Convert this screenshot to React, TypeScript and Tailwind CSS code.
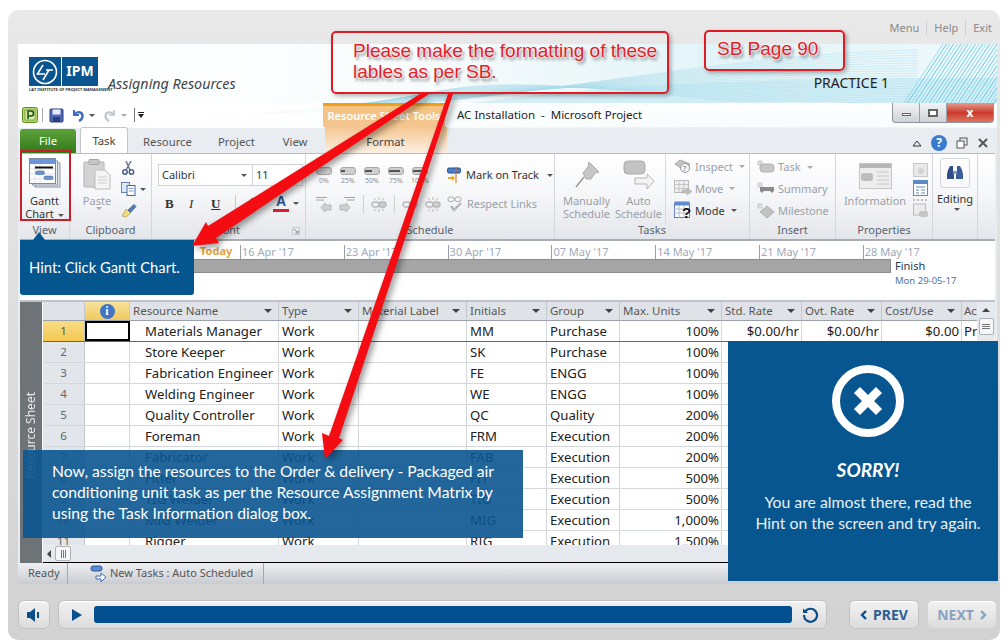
import React from 'react';

const rows = [
  ['1', 'Materials Manager', 'MM', 'Purchase', '100%'],
  ['2', 'Store Keeper', 'SK', 'Purchase', '100%'],
  ['3', 'Fabrication Engineer', 'FE', 'ENGG', '100%'],
  ['4', 'Welding Engineer', 'WE', 'ENGG', '100%'],
  ['5', 'Quality Controller', 'QC', 'Quality', '200%'],
  ['6', 'Foreman', 'FRM', 'Execution', '200%'],
  ['7', 'Fabricator', 'FAB', 'Execution', '200%'],
  ['8', 'Fitter', 'FIT', 'Execution', '500%'],
  ['9', 'TIG Welder', 'TIG', 'Execution', '500%'],
  ['10', 'MIG Welder', 'MIG', 'Execution', '1,000%'],
  ['11', 'Rigger', 'RIG', 'Execution', '1,500%'],
];

const gridCols = 'grid grid-cols-[42px_45px_149px_80px_108px_80px_73px_102px_80px_80px_80px_16px]';
const dates = ["16 Apr '17", "23 Apr '17", "30 Apr '17", "07 May '17", "14 May '17", "21 May '17", "28 May '17"];

function Caret({ light = false }: { light?: boolean }) {
  return <span className={`ml-1 inline-block h-0 w-0 border-x-[3px] border-t-[3px] border-x-transparent align-middle ${light ? 'border-t-[#aaa]' : 'border-t-[#555]'}`} />;
}

function HeaderCell({ label }: { label: string }) {
  return (
    <div className="flex items-center justify-between border-r border-[#c4c9d0] pl-[3px] pr-[6px] text-[11.5px] text-[#555]">
      <span className="whitespace-nowrap">{label}</span>
      <span className="h-0 w-0 border-x-[4px] border-t-[4px] border-x-transparent border-t-[#444]" />
    </div>
  );
}

function Waves() {
  const lines = Array.from({ length: 26 }, (_, i) => i);
  return (
    <svg className="absolute inset-0" width="979" height="84" viewBox="0 0 979 84" fill="none">
      <defs>
        <linearGradient id="hb" x1="0" x2="1" y1="0" y2="0">
          <stop offset="0" stopColor="#fff" />
          <stop offset="0.4" stopColor="#f8fcfd" />
          <stop offset="0.7" stopColor="#e3f4f8" />
          <stop offset="1" stopColor="#eef9fb" />
        </linearGradient>
      </defs>
      <rect width="979" height="84" fill="url(#hb)" />
      <path d="M380 70 C 560 40 720 34 979 34 L979 70 C 760 44 560 64 380 84 Z" fill="#b9e5f1" opacity="0.5" />
      {lines.map((i) => (
        <path key={i} d={`M${230 + i * 6} ${70 - i * 0.4} C 480 ${66 - i * 2.1}, 680 ${10 + i * 2.2}, 900 ${6 + i * 2.6}`} stroke="#a9dbe9" strokeWidth="0.6" opacity="0.7" />
      ))}
      {lines.map((i) => (
        <path key={`d${i}`} d={`M${884 + i * 3.6} 62 L${925 + i * 3.6} 0`} stroke={i % 2 ? '#5cc2de' : '#8fd6e8'} strokeWidth="0.9" />
      ))}
    </svg>
  );
}

function LtLogo() {
  return (
    <svg width="26" height="26" viewBox="0 0 26 26" fill="none" stroke="#fff" strokeWidth="1.6">
      <circle cx="13" cy="13" r="11.5" />
      <path d="M11 6 L5.5 15 H13" />
      <path d="M14 11 H21 M17 11 L11 21" />
    </svg>
  );
}

function QuickAccess() {
  return (
    <div className="flex items-center pl-[2px]">
      <svg width="16" height="16" viewBox="0 0 16 16"><rect x="0.5" y="0.5" width="15" height="15" rx="2" fill="#b6d968" stroke="#5b8b22" /><rect x="3" y="3" width="10" height="10" fill="#d8eca8" stroke="#3d6a16" strokeWidth="0.5" /><path d="M6 12V4h3a2 2 0 010 5H6" fill="none" stroke="#1e5216" strokeWidth="1.6" /></svg>
      <span className="ml-[4px] h-[14px] w-px bg-[#aaa]" />
      <svg className="ml-[6px]" width="15" height="15" viewBox="0 0 15 15"><rect x="1" y="1" width="13" height="13" rx="1" fill="#4f67b5" stroke="#2c3e7f" /><rect x="3.5" y="1.5" width="8" height="5" fill="#e6ebf7" /><rect x="4" y="9" width="7" height="5" fill="#2c3e7f" /></svg>
      <svg className="ml-[7px]" width="14" height="14" viewBox="0 0 14 14" fill="none"><path d="M3 2V7H8" stroke="#3f6fc4" strokeWidth="2" /><path d="M3.5 6.5C6 3 11 3.5 11.5 7.5C11.8 10 10 12 8 13" stroke="#3f6fc4" strokeWidth="2.4" /></svg>
      <Caret />
      <svg className="ml-[8px]" width="14" height="14" viewBox="0 0 14 14" fill="none"><path d="M11 2V7H6" stroke="#bcc3cc" strokeWidth="1.6" /><path d="M10.5 6.5C8 3 3 3.5 2.5 7.5C2.2 10 4 12 6 13" stroke="#bcc3cc" strokeWidth="2" /></svg>
      <Caret light />
      <span className="ml-[7px] h-[14px] w-px bg-[#777]" />
      <span className="ml-[3px] flex flex-col items-center gap-[1px]"><span className="h-px w-[6px] bg-[#222]" /><span className="h-0 w-0 border-x-[3px] border-t-[4px] border-x-transparent border-t-[#222]" /></span>
    </div>
  );
}

function GanttIcon() {
  return (
    <svg width="32" height="31" viewBox="0 0 32 31">
      <rect x="6" y="5" width="25" height="24" fill="#dfe4ea" stroke="#8f98a5" />
      <rect x="3.5" y="3" width="25" height="24" fill="#edf0f4" stroke="#8f98a5" />
      <rect x="0.5" y="0.5" width="26" height="25" fill="#fff" stroke="#7d8a99" />
      <rect x="1" y="1" width="25" height="5" fill="#6d94de" />
      <path d="M1 11H26M1 16H26M1 21H26M6 6V25M11 6V25" stroke="#cfd6e0" strokeWidth="0.7" />
      <rect x="6" y="8.5" width="18" height="2" fill="#111" />
      <rect x="6.5" y="13" width="9" height="3.5" rx="1.5" fill="#6f94cf" stroke="#36598f" strokeWidth="0.5" />
      <rect x="15" y="18" width="9" height="3.5" rx="1.5" fill="#6f94cf" stroke="#36598f" strokeWidth="0.5" />
    </svg>
  );
}

function PasteIcon() {
  return (
    <svg width="28" height="31" viewBox="0 0 28 31">
      <rect x="1" y="3" width="20" height="25" rx="1" fill="#d3d3d3" stroke="#b0b0b0" />
      <rect x="6" y="0.5" width="10" height="5" rx="1" fill="#c6c6c6" stroke="#a5a5a5" />
      <path d="M12 11H22L27 16V30H12Z" fill="#f4f4f4" stroke="#bdbdbd" />
      <path d="M15 18H24M15 21H24M15 24H24" stroke="#cfcfcf" />
    </svg>
  );
}

function Cut() {
  return <svg width="14" height="15" viewBox="0 0 14 15" fill="none" stroke="#4a5f88" strokeWidth="1.5"><path d="M5 1L9 10M10 1L5 10" stroke="#6f7785" /><circle cx="4" cy="12" r="2.2" /><circle cx="10.5" cy="12" r="2.2" /></svg>;
}
function CopyIcon() {
  return <svg width="15" height="14" viewBox="0 0 15 14"><rect x="0.5" y="0.5" width="8" height="10" fill="#dfe8f5" stroke="#6583b4" /><rect x="6" y="3.5" width="8" height="10" fill="#fff" stroke="#3f68a8" /><path d="M7.5 6.5H12.5M7.5 9H12.5" stroke="#7d98c4" /></svg>;
}
function Brush() {
  return <svg width="16" height="15" viewBox="0 0 16 15"><path d="M1 13L5 6L10 10L5 14Z" fill="#eedb82" stroke="#a88f35" strokeWidth="0.6" /><path d="M7 7L13 1.5L15 3.5L9.5 9.5Z" fill="#5578b5" stroke="#2e4a80" strokeWidth="0.6" /></svg>;
}

function Pill({ label, fill }: { label: string; fill: number }) {
  return (
    <div className="flex w-[24px] flex-col items-center leading-none">
      <span className="relative h-[8px] w-[16px] overflow-hidden rounded-[3px] border border-[#a8a8a8] bg-[#cfcfcf]">
        <span className={`absolute left-0 top-[2px] h-[2px] bg-[#555] ${fill === 0 ? 'w-0' : fill === 25 ? 'w-[4px]' : fill === 50 ? 'w-[7px]' : fill === 75 ? 'w-[11px]' : 'w-full'}`} />
      </span>
      <span className="mt-[2px] text-[7px] text-[#8c8c8c]">{label}</span>
    </div>
  );
}

function IndentIcon({ flip = false }: { flip?: boolean }) {
  return (
    <svg width="17" height="17" viewBox="0 0 17 17" className={flip ? '-scale-x-100' : ''} fill="none">
      <path d="M1 1.5H12M1 4H9" stroke="#a3a3a3" />
      <path d="M6 11.5L10 7V9H16V14H10V16Z" fill="#cfcfcf" stroke="#a8a8a8" strokeWidth="0.7" />
    </svg>
  );
}
function LinkIcon({ broken = false }: { broken?: boolean }) {
  return (
    <svg width="16" height="15" viewBox="0 0 16 15" fill="none">
      <rect x="1" y="5" width="7" height="5" rx="2.5" stroke="#b8b8b8" strokeWidth="1.4" />
      <rect x="8" y="5" width="7" height="5" rx="2.5" stroke="#b8b8b8" strokeWidth="1.4" fill={broken ? '#cfcfcf' : 'none'} />
      {broken && <path d="M8 0V3M3 1L5 3.5M13 1L11 3.5M8 12V15M3 14L5 11.5M13 14L11 11.5" stroke="#b8b8b8" />}
    </svg>
  );
}
function SmallIcon({ kind }: { kind: string }) {
  if (kind === 'inspect') return <svg width="19" height="15" viewBox="0 0 19 15"><path d="M1 5L6 1L16 5L11 12Z" fill="#c4c4c4" stroke="#a5a5a5" /><circle cx="11" cy="9" r="4.5" fill="#f5f5f5" stroke="#999" /><text x="9" y="12" fontSize="7" fill="#666">?</text></svg>;
  if (kind === 'move') return <svg width="19" height="16" viewBox="0 0 19 16"><rect x="0.5" y="0.5" width="14" height="12" fill="#efefef" stroke="#bbb" /><path d="M0 4.5H14M0 8.5H14M5 0V12M10 0V12" stroke="#c6c6c6" /><path d="M8 10H13V8L18 11.5L13 15V13H8Z" fill="#bfbfbf" stroke="#a5a5a5" strokeWidth="0.5" /></svg>;
  if (kind === 'mode') return <svg width="19" height="18" viewBox="0 0 19 18"><rect x="0.5" y="2.5" width="15" height="14" fill="#fff" stroke="#5c7cb5" /><rect x="0.5" y="0.5" width="15" height="4" fill="#5f8ccb" /><path d="M0 8H15M0 12H15M5 4V17M10 4V17" stroke="#aebcd3" /><text x="8" y="17" fontSize="15" fontWeight="bold" fill="#111" fontFamily="Liberation Sans">?</text></svg>;
  if (kind === 'task') return <svg width="19" height="14" viewBox="0 0 19 14"><path d="M1 1H5V5H1Z" fill="#ddd" stroke="#ccc" /><rect x="3" y="4" width="14" height="8" rx="3" fill="#c7c7c7" stroke="#b0b0b0" /></svg>;
  if (kind === 'summary') return <svg width="19" height="14" viewBox="0 0 19 14"><path d="M1 1H5V5H1Z" fill="#ddd" stroke="#ccc" /><path d="M3 5H17V9L15 11L13 9H7L5 11L3 9Z" fill="#8b8b8b" /></svg>;
  return <svg width="19" height="17" viewBox="0 0 19 17"><path d="M1 1H5V5H1Z" fill="#ddd" stroke="#ccc" /><path d="M10 3L17 9L10 15L3 9Z" fill="#c2c2c2" stroke="#b0b0b0" /></svg>;
}

function Group({ label, className, children }: { label: string; className: string; children: React.ReactNode }) {
  return (
    <div className={`flex h-full shrink-0 flex-col border-r border-[#d3d6db] ${className}`}>
      <div className="min-h-0 flex-1">{children}</div>
      <div className="h-[17px] text-center text-[11px] leading-[15px] text-[#5b6370]">{label}</div>
    </div>
  );
}

function SmallRow({ icon, label, dim = true, caret = false }: { icon: string; label: string; dim?: boolean; caret?: boolean }) {
  return (
    <div className={`flex h-[22px] items-center gap-[2px] text-[11px] ${dim ? 'text-[#9aa0a8]' : 'text-[#333]'}`}>
      <span className="flex w-[19px] justify-center"><SmallIcon kind={icon} /></span>
      <span>{label}</span>
      {caret && <Caret light={dim} />}
    </div>
  );
}

function Ribbon() {
  return (
    <div className="flex h-[87px] border-b-2 border-[#a9adb3] bg-gradient-to-b from-white via-[#f5f6f8] to-[#e3e6ea] text-[#333]">
      <Group label="View" className="w-[50px]">
        <div className="flex flex-col items-center pt-[4px] text-[11px] leading-[13px]">
          <GanttIcon />
          <span className="mt-[5px]">Gantt</span>
          <span>Chart<Caret /></span>
        </div>
      </Group>
      <Group label="Clipboard" className="w-[82px]">
        <div className="flex pl-[12px] pt-[5px]">
          <div className="flex w-[30px] flex-col items-center text-[11px] leading-[13px] text-[#9aa0a8]">
            <PasteIcon />
            <span className="mt-[4px]">Paste</span>
            <Caret light />
          </div>
          <div className="ml-[9px] flex flex-col gap-[7px] pt-[1px]">
            <Cut />
            <span className="flex items-center"><CopyIcon /><Caret /></span>
            <Brush />
          </div>
        </div>
      </Group>
      <Group label="Font" className="relative w-[154px]">
        <div className="pl-[6px] pt-[10px]">
          <div className="flex h-[22px] w-[145px] border border-[#cfd3d8] bg-white text-[11px] leading-[20px]">
            <span className="flex w-[94px] items-center justify-between border-r border-[#cfd3d8] pl-[3px] pr-[5px]">Calibri<Caret /></span>
            <span className="flex flex-1 items-center justify-between pl-[3px] pr-[5px]">11<Caret /></span>
          </div>
          <div className="mt-[8px] flex items-center pl-[7px] font-['Liberation_Serif'] text-[13px] leading-none">
            <b className="w-[24px]">B</b>
            <i className="w-[22px]">I</i>
            <span className="w-[24px] font-bold underline">U</span>
            <span className="h-[16px] w-px bg-[#c8c8c8]" />
            <svg className="ml-[8px]" width="15" height="15" viewBox="0 0 15 15"><path d="M3 9L8 2L12 8L7 12Z" fill="#eee" stroke="#888" /><path d="M12 9L14 13H10Z" fill="#d8c050" /></svg>
            <span className="ml-[14px] flex flex-col items-center font-['Liberation_Sans'] text-[14px] font-bold text-[#2a4d8f]">A<span className="mt-[1px] h-[3px] w-[16px] bg-[#e01b2f]" /></span>
            <Caret />
          </div>
        </div>
        <svg className="absolute bottom-[4px] right-[5px]" width="8" height="8" viewBox="0 0 8 8" fill="none" stroke="#8a8f96"><path d="M0.5 0.5H7.5V7.5H0.5Z" stroke="#c4c7cb" /><path d="M2 2L6 6M6 3.5V6H3.5" /></svg>
      </Group>
      <Group label="Schedule" className="w-[249px]">
        <div className="flex pl-[6px] pt-[13px]">
          <div className="w-[135px]">
            <div className="flex">
              <Pill label="0%" fill={0} />
              <Pill label="25%" fill={25} />
              <Pill label="50%" fill={50} />
              <Pill label="75%" fill={75} />
              <Pill label="100%" fill={100} />
            </div>
            <div className="mt-[11px] flex items-center gap-[7px] pl-[3px]">
              <IndentIcon />
              <IndentIcon flip />
              <span className="h-[18px] w-px bg-[#d0d0d0]" />
              <LinkIcon broken />
              <span className="h-[18px] w-px bg-[#d0d0d0]" />
              <LinkIcon />
              <LinkIcon broken />
            </div>
          </div>
          <div className="-mt-[3px] text-[11px]">
            <div className="flex h-[22px] items-center gap-[4px]">
              <svg width="15" height="16" viewBox="0 0 15 16"><rect x="0.5" y="1" width="13" height="5" rx="1.5" fill="#4a7dc9" stroke="#2a4f8a" /><path d="M9 0V16" stroke="#c96a1e" /><path d="M1 10H5V8L8 11L5 14V12H1Z" fill="#eea62a" /></svg>
              <span>Mark on Track</span><Caret />
            </div>
            <div className="mt-[7px] flex h-[22px] items-center gap-[4px] text-[#9aa0a8]">
              <svg width="16" height="16" viewBox="0 0 16 16" fill="none"><rect x="1" y="1" width="6" height="4.5" rx="2" stroke="#aaa" /><rect x="8" y="1" width="6" height="4.5" rx="2" stroke="#aaa" /><path d="M4 10L7 14L14 7" stroke="#b5b5b5" strokeWidth="2.4" /></svg>
              <span>Respect Links</span>
            </div>
          </div>
        </div>
      </Group>
      <Group label="Tasks" className="w-[195px]">
        <div className="flex pl-[8px] pt-[6px] text-[11px] leading-[13px] text-[#9aa0a8]">
          <div className="flex w-[47px] flex-col items-center">
            <svg width="30" height="30" viewBox="0 0 30 30"><path d="M17 2L27 12L23 13L19 19L14 19L11 13L16 7Z" fill="#c6c6c6" stroke="#aaa" /><path d="M12 17L4 27" stroke="#999" strokeWidth="1.5" /></svg>
            <span className="mt-[4px]">Manually</span>
            <span>Schedule</span>
          </div>
          <div className="ml-[5px] flex w-[47px] flex-col items-center">
            <svg width="32" height="30" viewBox="0 0 32 30"><rect x="1" y="1" width="21" height="13" rx="4" fill="#c3c3c3" stroke="#aaa" /><path d="M12 18H24V14L31 21L24 29V24H12Z" fill="#f4f4f4" stroke="#b5b5b5" /></svg>
            <span className="mt-[4px]">Auto</span>
            <span>Schedule</span>
          </div>
          <div className="-mt-[6px] ml-[3px] flex h-[70px] w-[74px] flex-col border-l border-[#d8dade] pl-[8px] pt-[1px]">
            <SmallRow icon="inspect" label="Inspect" caret />
            <SmallRow icon="move" label="Move" caret />
            <SmallRow icon="mode" label="Mode" dim={false} caret />
          </div>
        </div>
      </Group>
      <Group label="Insert" className="w-[86px]">
        <div className="pl-[7px] pt-[2px]">
          <SmallRow icon="task" label="Task" caret />
          <SmallRow icon="summary" label="Summary" />
          <SmallRow icon="milestone" label="Milestone" />
        </div>
      </Group>
      <Group label="Properties" className="w-[97px]">
        <div className="flex pl-[7px] pt-[9px] text-[11px] text-[#9aa0a8]">
          <div className="flex w-[64px] flex-col items-center">
            <svg width="33" height="26" viewBox="0 0 33 26"><rect x="0.5" y="0.5" width="32" height="25" fill="#ededed" stroke="#c5c5c5" /><rect x="1" y="1" width="31" height="4" fill="#b5b5b5" /><rect x="2" y="10" width="12" height="8" rx="3" fill="#bdbdbd" /><path d="M18 9H30M18 13H30M18 17H30M18 21H30" stroke="#c8c8c8" /></svg>
            <span className="mt-[4px]">Information</span>
          </div>
          <div className="ml-[6px] flex flex-col gap-[3px]">
            <svg width="15" height="14" viewBox="0 0 15 14"><rect x="0.5" y="0.5" width="14" height="13" fill="#e9e9e9" stroke="#c9c9c9" /><circle cx="8" cy="8" r="3" fill="#d2d2d2" /></svg>
            <svg width="15" height="16" viewBox="0 0 15 16"><rect x="0.5" y="0.5" width="14" height="15" fill="#fff" stroke="#5d8bc5" /><rect x="1" y="1" width="13" height="3" fill="#5d8bc5" /><path d="M3 7H12M3 10H6M8 10H12M3 13H6M8 13H12" stroke="#5d8bc5" /></svg>
            <svg width="15" height="19" viewBox="0 0 15 19"><path d="M0 1H15" stroke="#8b8b8b" strokeDasharray="2 2" /><rect x="0.5" y="5" width="12" height="11" fill="#ececec" stroke="#bbb" /><rect x="6" y="12" width="9" height="6" rx="2" fill="#c5c5c5" /></svg>
          </div>
        </div>
      </Group>
      <Group label="" className="w-[45px]">
        <div className="flex flex-col items-center pt-[4px] text-[11px]">
          <span className="flex h-[30px] w-[30px] items-center justify-center rounded-[3px] border border-[#d4d6da]">
            <svg width="18" height="16" viewBox="0 0 18 16"><path d="M2 5L4 1H7V5L8 10V14H1V9Z" fill="#2f4d86" /><path d="M16 5L14 1H11V5L10 10V14H17V9Z" fill="#3b5d9c" /><rect x="7" y="6" width="4" height="3" fill="#8aa0c5" /></svg>
          </span>
          <span className="mt-[3px]">Editing</span>
          <Caret />
        </div>
      </Group>
    </div>
  );
}

function Timeline() {
  return (
    <div className="h-[61px] border-b-2 border-[#bfc3c8] bg-white">
      <div className="flex h-[18px] items-end pl-[180px] text-[11px] text-[#a0aab8]">
        <span className="w-[40px] font-bold text-[#e3a53a]">Today</span>
        {dates.map((d) => (
          <span key={d} className="w-[103.8px] whitespace-nowrap border-l border-[#9aa0a8] pl-[1px] leading-[14px]">{d}</span>
        ))}
      </div>
      <div className="flex h-[38px]">
        <div className="h-[14px] w-[871px] border border-[#8c8c8c] bg-[#a5a5a5]" />
        <div className="pl-[4px] leading-none">
          <div className="mt-[1px] text-[11px] text-[#1d3a55]">Finish</div>
          <div className="mt-[5px] text-[9.5px] text-[#4d74a8]">Mon 29-05-17</div>
        </div>
      </div>
    </div>
  );
}

function Sheet() {
  return (
    <div className="flex min-h-0 flex-1">
      <div className="relative w-[23px] shrink-0 border-r border-[#fff] bg-[#6e7378]">
        <span className="absolute bottom-[84px] left-[3px] rotate-180 whitespace-nowrap text-[12px] leading-[16px] text-[#e8e8e8] [writing-mode:vertical-rl]">Resource Sheet</span>
      </div>
      <div className="min-w-0 flex-1">
        <div className="relative h-[243px] overflow-hidden bg-white">
          <div className={`${gridCols} h-[19px] border-b border-[#9ba2aa] bg-[#dfe3e8]`}>
            <div className="border-r border-[#c4c9d0]" />
            <div className="flex items-center justify-center border-r border-[#c4c9d0] bg-gradient-to-b from-[#f6e29a] to-[#f1c95c]">
              <span className="flex h-[15px] w-[15px] items-center justify-center rounded-full bg-[#3f74c6] font-['Liberation_Serif'] text-[12px] font-bold text-white">i</span>
            </div>
            <HeaderCell label="Resource Name" />
            <HeaderCell label="Type" />
            <HeaderCell label="Material Label" />
            <HeaderCell label="Initials" />
            <HeaderCell label="Group" />
            <HeaderCell label="Max. Units" />
            <HeaderCell label="Std. Rate" />
            <HeaderCell label="Ovt. Rate" />
            <HeaderCell label="Cost/Use" />
            <div className="pl-[2px] text-[11.5px] leading-[18px] text-[#555]">Ac</div>
          </div>
          {rows.map((r, i) => (
            <div key={r[0]} className={`${gridCols} h-[21px] border-b text-[13.2px] leading-[20px] text-[#222] ${i === 0 ? 'border-[#666]' : 'border-[#d4d7db]'}`}>
              <div className={`border-r border-[#c4c9d0] text-center text-[11.5px] ${i === 0 ? 'bg-gradient-to-b from-[#f8dc85] to-[#f5c84f] text-[#555]' : 'bg-[#e2e5ea] text-[#666]'}`}>{r[0]}</div>
              <div className={`${i === 0 ? 'border-2 border-black' : 'border-r border-[#d4d7db]'}`} />
              <div className="whitespace-nowrap border-r border-[#d4d7db] pl-[15px]">{r[1]}</div>
              <div className="border-r border-[#d4d7db] pl-[3px]">Work</div>
              <div className="border-r border-[#d4d7db]" />
              <div className="border-r border-[#d4d7db] pl-[3px]">{r[2]}</div>
              <div className="border-r border-[#d4d7db] pl-[3px]">{r[3]}</div>
              <div className="border-r border-[#d4d7db] pr-[2px] text-right">{r[4]}</div>
              <div className="border-r border-[#d4d7db] pr-[2px] text-right">$0.00/hr</div>
              <div className="border-r border-[#d4d7db] pr-[2px] text-right">$0.00/hr</div>
              <div className="border-r border-[#d4d7db] pr-[2px] text-right">$0.00</div>
              <div className="overflow-hidden pl-[2px]">Pr</div>
            </div>
          ))}
          <div className="absolute right-0 top-0 h-full w-[18px] bg-[#e6e9ed]">
            <span className="mx-auto mt-[6px] block h-0 w-0 border-x-[4px] border-b-[4px] border-x-transparent border-b-[#444]" />
            <span className="mx-auto mt-[6px] flex h-[17px] w-[15px] flex-col items-center justify-center gap-[1px] rounded-[2px] border border-[#aeb3ba] bg-[#f5f6f8]">
              <span className="h-px w-[8px] bg-[#777]" /><span className="h-px w-[8px] bg-[#777]" /><span className="h-px w-[8px] bg-[#777]" />
            </span>
          </div>
        </div>
        <div className="flex h-[18px] items-center border-b border-black bg-[#e6e9ed] pl-[4px]">
          <span className="h-0 w-0 border-y-[4px] border-r-[4px] border-y-transparent border-r-[#444]" />
          <span className="ml-[4px] flex h-[15px] w-[16px] items-center justify-center gap-[1px] rounded-[2px] border border-[#aeb3ba] bg-[#f5f6f8]">
            <span className="h-[8px] w-px bg-[#777]" /><span className="h-[8px] w-px bg-[#777]" /><span className="h-[8px] w-px bg-[#777]" />
          </span>
        </div>
      </div>
    </div>
  );
}

function StatusBar() {
  return (
    <div className="-mx-[2px] flex h-[21px] shrink-0 items-center bg-gradient-to-b from-[#eef0f3] to-[#c9ccd1] text-[11px] text-[#555]">
      <span className="flex h-full w-[50px] items-center border-r border-[#a5a8ad] pl-[10px]">Ready</span>
      <svg className="ml-[22px]" width="17" height="18" viewBox="0 0 17 18"><rect x="1" y="1" width="11" height="5" rx="2" fill="#5a8ad0" stroke="#2f5a9a" /><path d="M6 11H11V8L16 12L11 17V14H6Z" fill="#fff" stroke="#3f6db0" /></svg>
      <span className="ml-[3px] flex h-full items-center border-r border-[#a5a8ad] pr-[10px]">New Tasks : Auto Scheduled</span>
    </div>
  );
}

function Controls() {
  const btn = 'rounded-[6px] border border-[#c2c2c2] bg-gradient-to-b from-[#f2f2f2] to-[#dcdcdc] shadow-[inset_0_1px_0_#fff]';
  return (
    <div className="flex h-[29px] items-stretch pl-[10px]">
      <div className={`${btn} flex w-[32px] items-center justify-center`}>
        <svg width="14" height="14" viewBox="0 0 14 14" fill="#0a4f8c"><path d="M0 4H3L8 0V14L3 10H0Z" /><rect x="10" y="4" width="2" height="6" /></svg>
      </div>
      <div className={`${btn} ml-[8px] flex w-[769px] items-center`}>
        <span className="ml-[13px] h-0 w-0 border-y-[6px] border-l-[10px] border-y-transparent border-l-[#0a4f8c]" />
        <div className="ml-[12px] h-[17px] w-[698px] rounded-[3px] bg-[#034f8f]" />
        <svg className="ml-[10px]" width="17" height="17" viewBox="0 0 17 17" fill="none" stroke="#0a4f8c" strokeWidth="2.2"><path d="M3.2 5.5A6.5 6.5 0 1 1 2 9" /><path d="M1 2.5V7H6" fill="#0a4f8c" stroke="none" /></svg>
      </div>
      <div className={`${btn} ml-[22px] flex w-[70px] items-center justify-center gap-[6px] text-[14px] font-bold text-[#2a5d91]`}>
        <svg width="7" height="10" viewBox="0 0 7 10" fill="none" stroke="#0a4f8c" strokeWidth="2.4"><path d="M6 1L2 5L6 9" /></svg>PREV
      </div>
      <div className={`${btn} ml-[8px] flex w-[70px] items-center justify-center gap-[6px] border-[#d4d4d4] text-[14px] font-bold text-[#8aa3bd]`}>
        NEXT<svg width="7" height="10" viewBox="0 0 7 10" fill="none" stroke="#8aa3bd" strokeWidth="2.4"><path d="M1 1L5 5L1 9" /></svg>
      </div>
    </div>
  );
}

function Arrows() {
  return (
    <svg className="pointer-events-none absolute left-0 top-0 drop-shadow-[3px_3px_3px_rgba(0,0,0,0.4)]" width="1005" height="643" viewBox="0 0 1005 643">
      <path d="M420 94 L429 94 L216 238 L219 243 L192 246 L206 222 L208 226 Z" fill="#f30d12" />
      <path d="M448 94 L453 94 L339 438 L343 440 L325 459 L322 433 L329 436 Z" fill="#f30d12" />
    </svg>
  );
}

export default function App() {
  const callout = "absolute whitespace-nowrap rounded-[5px] border-2 border-[#df1c24] font-['Liberation_Sans'] text-[#e2202a] [text-shadow:0_0_2px_#fff,0_0_2px_#fff,2px_3px_3px_rgba(0,0,0,0.45)] shadow-[2px_2px_4px_rgba(0,0,0,0.3)]";
  return (
    <div className="relative h-[643px] w-[1005px] overflow-hidden bg-white font-['Noto_Sans',sans-serif]">
      <div className="ml-[8px] mt-[10px] h-[630px] w-[992px] rounded-[10px] bg-gradient-to-b from-[#e9e9e9] to-[#d2d2d2]">
        <div className="flex h-[34px] items-center justify-end pr-[8px] pt-[2px] text-[11px] text-[#8a8a8a]">
          <span className="border-r border-[#cfcfcf] pr-[7px]">Menu</span>
          <span className="border-r border-[#cfcfcf] px-[7px]">Help</span>
          <span className="pl-[7px]">Exit</span>
        </div>
        <div className="relative ml-[10px] h-[540px] w-[979px] bg-[#e9ecf0]">
          <Waves />
          <div className="relative flex h-[59px] items-start pl-[11px] pt-[13px]">
            <div className="w-[69px]">
              <div className="flex h-[29px] bg-[#0a548f] text-white">
                <span className="flex w-[33px] items-center justify-center border-r border-white"><LtLogo /></span>
                <span className="flex-1 text-center text-[14px] font-bold leading-[28px]">IPM</span>
              </div>
              <div className="mt-[1px] whitespace-nowrap text-[4px] font-bold leading-[6px] text-[#333]">L&T INSTITUTE OF PROJECT MANAGEMENT</div>
            </div>
            <span className="ml-[10px] mt-[16px] text-[14.3px] italic text-[#444]">Assigning Resources</span>
            <span className="ml-[578px] mt-[15px] text-[14px] text-[#222]">PRACTICE 1</span>
          </div>
          <div className="relative flex h-[481px] flex-col px-[2px]">
            <div className="-mx-[2px] flex h-[24px] shrink-0 items-center bg-gradient-to-b from-white/95 to-white/70 pl-[2px]">
              <div className="w-[303px]"><QuickAccess /></div>
              <div className="flex h-[24px] w-[122px] items-start justify-center border-t-[3px] border-[#ef9f1c] bg-gradient-to-b from-[#f5c27f] to-[#f4c792] text-[11px] font-semibold leading-[20px] text-white">Resource Sheet Tools</div>
              <span className="ml-[12px] text-[11.5px] text-[#222]">AC Installation&nbsp; -&nbsp; Microsoft Project</span>
              <div className="ml-auto mr-[3px] flex h-[20px] w-[102px] self-start overflow-hidden rounded-b-[4px] border border-t-0 border-[#8f959c] bg-gradient-to-b from-[#f2f3f5] to-[#cfd2d6]">
                <span className="flex flex-1 items-center justify-center border-r border-[#9ca1a7]"><span className="mt-[4px] h-[3px] w-[9px] border border-[#666] bg-white" /></span>
                <span className="flex flex-1 items-center justify-center border-r border-[#9ca1a7]"><span className="h-[8px] w-[10px] border-2 border-[#666] bg-white" /></span>
                <span className="flex w-[46px] items-center justify-center bg-gradient-to-b from-[#e59a8b] via-[#c8392b] to-[#e0705f] text-[12px] font-bold text-white">x</span>
              </div>
            </div>
            <div className="flex h-[26px] shrink-0 items-end text-[11.3px] text-[#555]">
              <div className="flex h-[24px] w-[56px] items-center justify-center rounded-t-[3px] bg-gradient-to-b from-[#5ea23a] to-[#2f7a1a] pt-[1px] text-white">File</div>
              <div className="ml-[4px] flex h-[26px] w-[48px] items-center justify-center rounded-t-[3px] border border-b-0 border-[#c3c7cc] bg-white pt-[2px] text-[#444]">Task</div>
              <span className="ml-[15px] pb-[2px]">Resource</span>
              <span className="ml-[26px] pb-[2px]">Project</span>
              <span className="ml-[28px] pb-[2px]">View</span>
              <div className="ml-[17px] flex h-[26px] w-[122px] items-center justify-center bg-gradient-to-b from-[#f4c792] to-[#fbf0e2] pt-[4px] text-[#444]">Format</div>
              <div className="ml-auto mr-[6px] flex items-center gap-[9px] pb-[2px]">
                <svg width="10" height="8" viewBox="0 0 10 8" fill="none" stroke="#333"><path d="M1 7L5 2L9 7Z" /></svg>
                <span className="flex h-[16px] w-[16px] items-center justify-center rounded-full bg-[#3a7bd0] text-[12px] font-bold leading-none text-white">?</span>
                <svg width="12" height="12" viewBox="0 0 12 12" fill="none" stroke="#555"><rect x="4" y="1" width="7" height="7" /><rect x="1" y="4" width="7" height="7" fill="#fff" /></svg>
                <svg width="12" height="12" viewBox="0 0 12 12" fill="none" stroke="#555" strokeWidth="2"><path d="M2 2L10 10M10 2L2 10" /></svg>
              </div>
            </div>
            <div className="shrink-0 border-t border-[#b9bdc3]"><Ribbon /></div>
            <Timeline />
            <Sheet />
            <StatusBar />
          </div>
        </div>
        <div className="pt-[16px]"><Controls /></div>
      </div>

      <div className={`${callout} left-[331px] top-[31px] h-[63px] w-[338px] pl-[20px] pt-[7px] text-[19px] leading-[21px]`}>
        Please make the formatting of these<br />lables as per SB.
      </div>
      <div className={`${callout} left-[704px] top-[30px] h-[41px] w-[141px] pl-[11px] pt-[6px] text-[19px] leading-[21px]`}>SB Page 90</div>

      <div className="absolute left-[20px] top-[150px] h-[71px] w-[51px] border-2 border-[#c8202a]" />

      <div className="absolute left-[20px] top-[240px] flex h-[55px] w-[174px] items-center rounded-b-[3px] bg-[#05558f] pl-[9px] font-['Lato',sans-serif] text-[14.8px] text-white">
        <span className="absolute -top-[8px] left-[13px] h-0 w-0 border-x-[6px] border-b-[8px] border-x-transparent border-b-[#05558f]" />
        Hint: Click Gantt Chart.
      </div>

      <div className="absolute left-[23px] top-[450px] h-[88px] w-[500px] bg-[#0a5590]/90 pl-[29px] pr-[10px] pt-[11px] font-['Lato',sans-serif] text-[15.7px] leading-[21px] text-white">
        Now, assign the resources to the Order &amp; delivery - Packaged air<br />conditioning unit task as per the Resource Assignment Matrix by<br />using the Task Information dialog box.
      </div>

      <div className="absolute left-[728px] top-[341px] flex h-[240px] w-[270px] flex-col items-center bg-[#08568f] pl-[10px] pt-[24px] font-['Lato',sans-serif] text-white">
        <svg width="72" height="72" viewBox="0 0 72 72" fill="none">
          <circle cx="36" cy="36" r="32" stroke="#fff" strokeWidth="8" />
          <path d="M25 25L47 47M47 25L25 47" stroke="#fff" strokeWidth="8.5" />
        </svg>
        <div className="mt-[21px] text-[19px] font-bold italic leading-[24px]">SORRY!</div>
        <div className="mt-[9px] text-center text-[15.8px] leading-[21px] text-[#e8f0f6]">You are almost there, read the<br />Hint on the screen and try again.</div>
      </div>

      <Arrows />
    </div>
  );
}
